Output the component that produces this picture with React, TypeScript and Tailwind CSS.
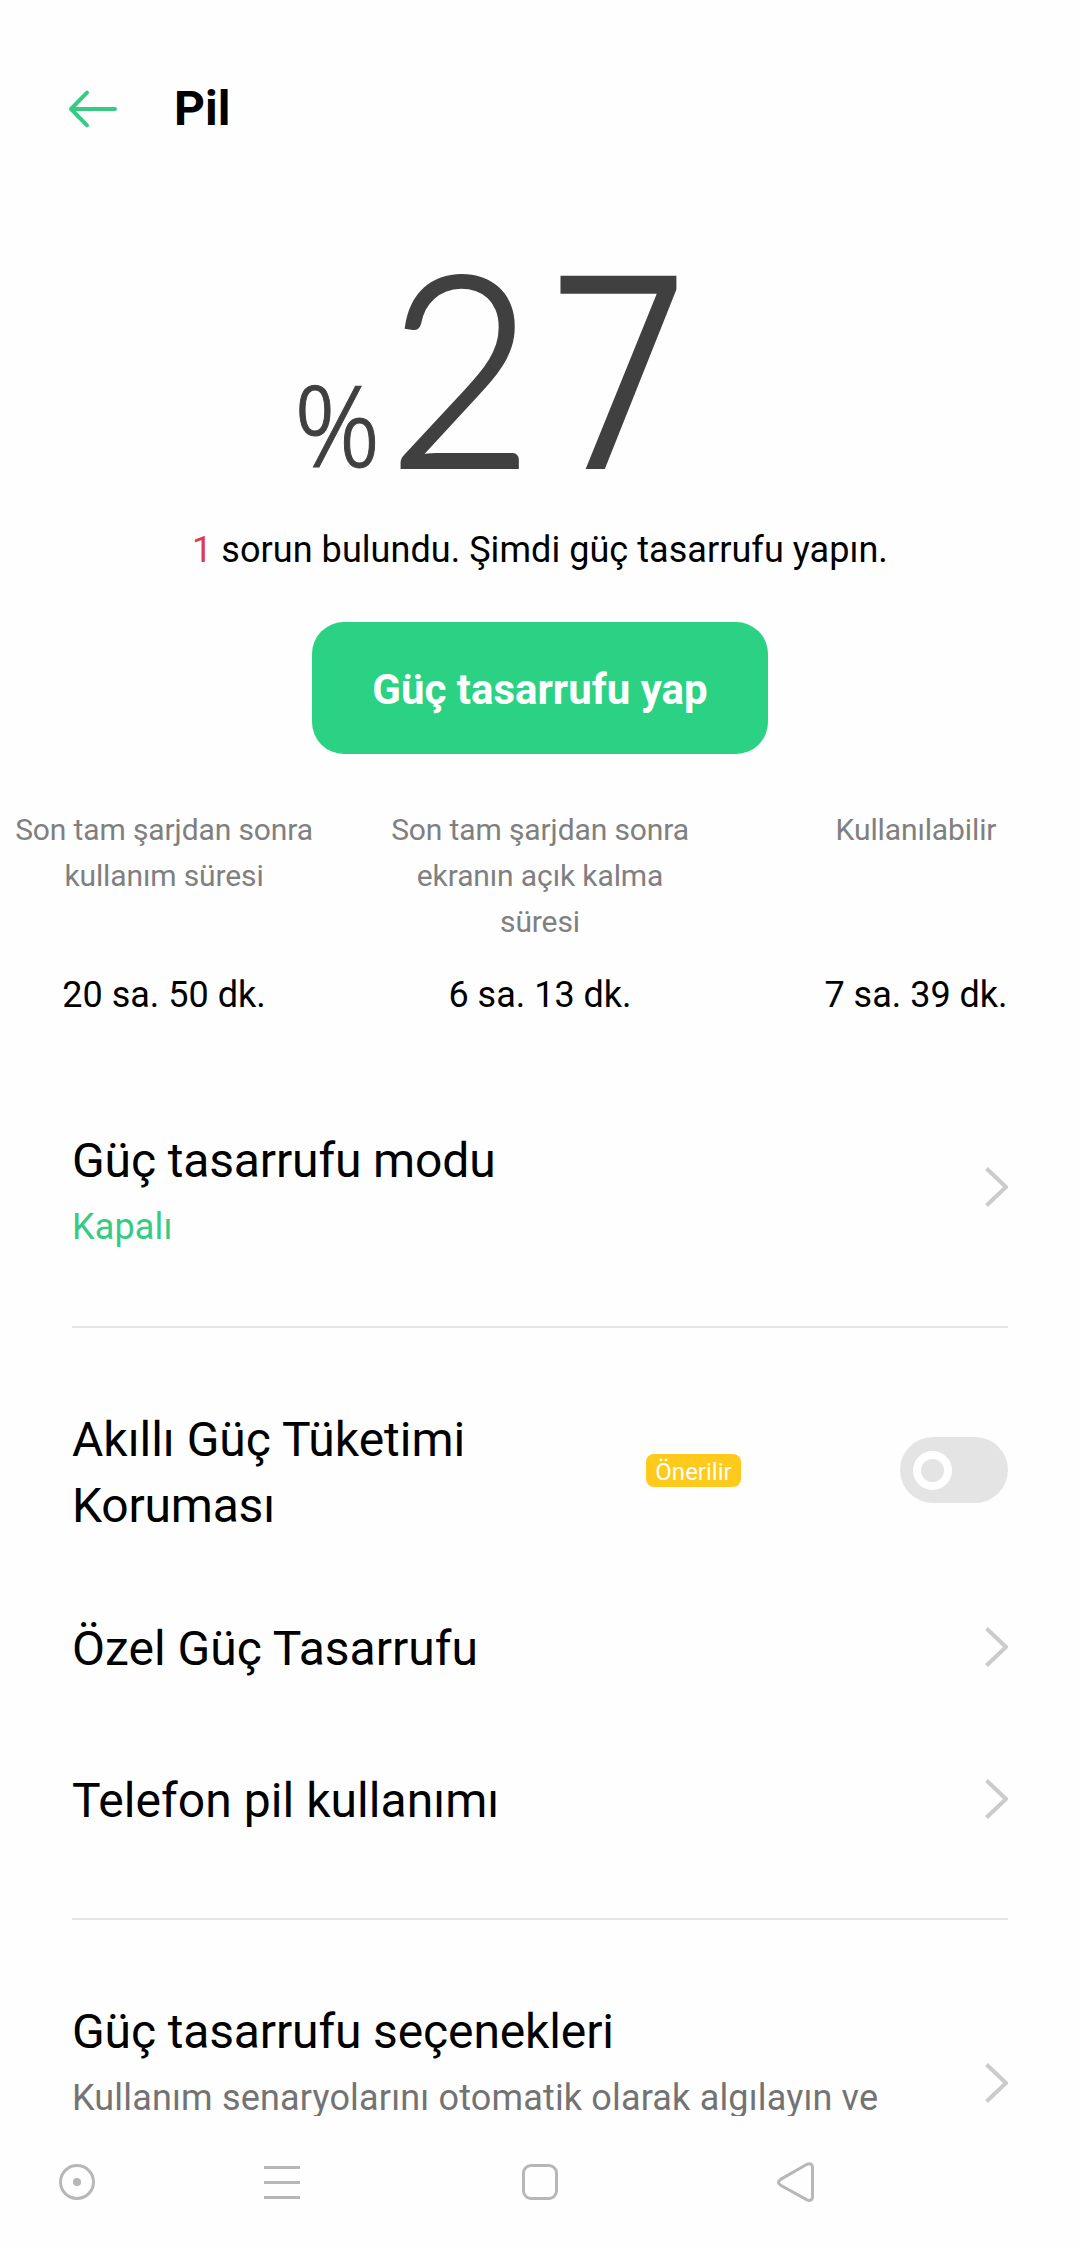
import type { ReactNode } from 'react'

interface Stat {
  label: string
  value: string
}

const stats: Stat[] = [
  { label: 'Son tam şarjdan sonra kullanım süresi', value: '20 sa. 50 dk.' },
  { label: 'Son tam şarjdan sonra ekranın açık kalma süresi', value: '6 sa. 13 dk.' },
  { label: 'Kullanılabilir', value: '7 sa. 39 dk.' },
]

function BackArrow() {
  return (
    <svg className="h-10 w-[50px]" viewBox="0 0 50 40" fill="none" stroke="#36cb83" strokeWidth="4" strokeLinecap="round" strokeLinejoin="round">
      <path d="M47 20H3M19 3.7L3 20l16 16.3" />
    </svg>
  )
}

function Chevron() {
  return (
    <svg className="h-10 w-6 shrink-0" viewBox="0 0 24 40" fill="none" stroke="#cbcbcb" strokeWidth="4" strokeLinejoin="round">
      <path d="M2.5 1.5L22 20L2.5 38.5" />
    </svg>
  )
}

function Toggle() {
  return (
    <div className="flex h-[66px] w-[108px] shrink-0 items-center rounded-full bg-[#e4e4e4] pl-[13px]">
      <div className="h-[39px] w-[39px] rounded-full border-8 border-white" />
    </div>
  )
}

function Divider() {
  return <div className="mx-[72px] h-0.5 bg-[#e5e5e5]" />
}

interface RowProps {
  className: string
  children: ReactNode
}

function Row({ className, children }: RowProps) {
  return <div className={`flex items-center justify-between px-[72px] ${className}`}>{children}</div>
}

export default function App() {
  return (
    <div className="h-[2248px] w-[1080px] overflow-hidden bg-[#fefefe] font-[Roboto,sans-serif] text-black">
      <div className="h-[2116px] overflow-hidden">
        {/* Header */}
        <div className="flex h-[141px] items-center pt-[77px] pl-[68px]">
          <BackArrow />
          <h1 className="ml-[56px] text-5xl leading-[64px] font-bold">Pil</h1>
        </div>

        {/* Battery level */}
        <div className="mt-[89px] flex h-[269px] items-baseline pl-[294px] font-light text-[#404040]">
          <span className="w-[94px] origin-left scale-x-95 font-['Noto_Sans',sans-serif] text-[112px] leading-none [-webkit-text-stroke:1px_#404040]">%</span>
          <span className="w-[162px] origin-left scale-x-94 font-[Lato,sans-serif] text-[267px] leading-none [-webkit-text-stroke:4px_#404040]">2</span>
          <span className="origin-left scale-x-91 font-['Noto_Sans',sans-serif] text-[265px] leading-none [-webkit-text-stroke:4px_#404040]">7</span>
        </div>
        <p className="mt-[27px] text-center text-4xl leading-[48px] tracking-[0.05px]">
          <span className="text-[#d9404f]">1</span> sorun bulundu. Şimdi güç tasarrufu yapın.
        </p>
        <button className="mx-auto mt-12 block h-[132px] w-[456px] rounded-[32px] bg-[#2bd283] pt-1 text-[42px] leading-[56px] font-bold text-white">
          Güç tasarrufu yap
        </button>

        {/* Usage stats */}
        <div className="mt-[53px] flex justify-between">
          {stats.map((stat) => (
            <div key={stat.label} className="w-[328px] text-center">
              <div className="h-[138px] text-[30px] leading-[46px] tracking-[-0.12px] text-[#808080]">{stat.label}</div>
              <div className="mt-[26px] text-4xl leading-[48px]">{stat.value}</div>
            </div>
          ))}
        </div>

        {/* Settings */}
        <Row className="mt-[93px] h-[150px]">
          <div className="pt-1.5">
            <div className="text-5xl leading-[64px] tracking-[-0.13px]">Güç tasarrufu modu</div>
            <div className="mt-2.5 text-4xl leading-[48px] tracking-[0.16px] text-[#36cb83]">Kapalı</div>
          </div>
          <Chevron />
        </Row>
        <div className="h-16" />
        <Divider />

        <Row className="mt-[67px] h-[150px]">
          <div className="w-[574px] pt-[5px] text-5xl leading-[66px]">
            Akıllı Güç Tüketimi
            <br />
            <span className="tracking-[-0.2px]">Koruması</span>
          </div>
          <div className="mr-auto h-[33px] w-[95px] rounded-lg bg-[#ffca1b] text-center text-2xl leading-[36px] text-white">
            Önerilir
          </div>
          <Toggle />
        </Row>
        <Row className="mt-[26px] h-[152px]">
          <div className="pt-[3px] text-5xl leading-[66px]">Özel Güç Tasarrufu</div>
          <Chevron />
        </Row>
        <Row className="h-[152px]">
          <div className="pt-[3px] text-5xl leading-[66px] tracking-[0.05px]">Telefon pil kullanımı</div>
          <Chevron />
        </Row>
        <div className="h-[43px]" />
        <Divider />

        <Row className="mt-[80px] h-[166px]">
          <div className="h-[166px]">
            <div className="text-5xl leading-[64px] tracking-[-0.13px]">Güç tasarrufu seçenekleri</div>
            <div className="mt-2.5 text-4xl leading-[48px] tracking-[0.17px] text-[#737373]">
              Kullanım senaryolarını otomatik olarak algılayın ve
            </div>
          </div>
          <Chevron />
        </Row>
      </div>

      {/* Navigation bar */}
      <div className="flex h-[132px] items-center pl-[57px]">
        <svg className="h-10 w-10" viewBox="0 0 40 40" fill="none">
          <circle cx="20" cy="20" r="16.5" stroke="#b7b7b7" strokeWidth="3" />
          <circle cx="20" cy="20" r="4" fill="#b7b7b7" />
        </svg>
        <svg className="ml-[165px] h-10 w-10" viewBox="0 0 40 40" fill="none" stroke="#b7b7b7" strokeWidth="3">
          <path d="M2 5.5h36M2 20.5h36M2 35.5h36" />
        </svg>
        <svg className="ml-[218px] h-10 w-10" viewBox="0 0 40 40" fill="none">
          <rect x="3.5" y="3.5" width="33" height="33" rx="7.5" stroke="#b7b7b7" strokeWidth="3" />
        </svg>
        <svg className="ml-[216px] h-10 w-10" viewBox="0 0 40 40" fill="none" stroke="#b7b7b7" strokeWidth="3">
          <path d="M31 2.3L4.6 17.4Q.2 20.3 4.6 23.2L31 37.9Q36 39.7 36.5 35V5.2Q36 .5 31 2.3Z" />
        </svg>
      </div>
    </div>
  )
}
